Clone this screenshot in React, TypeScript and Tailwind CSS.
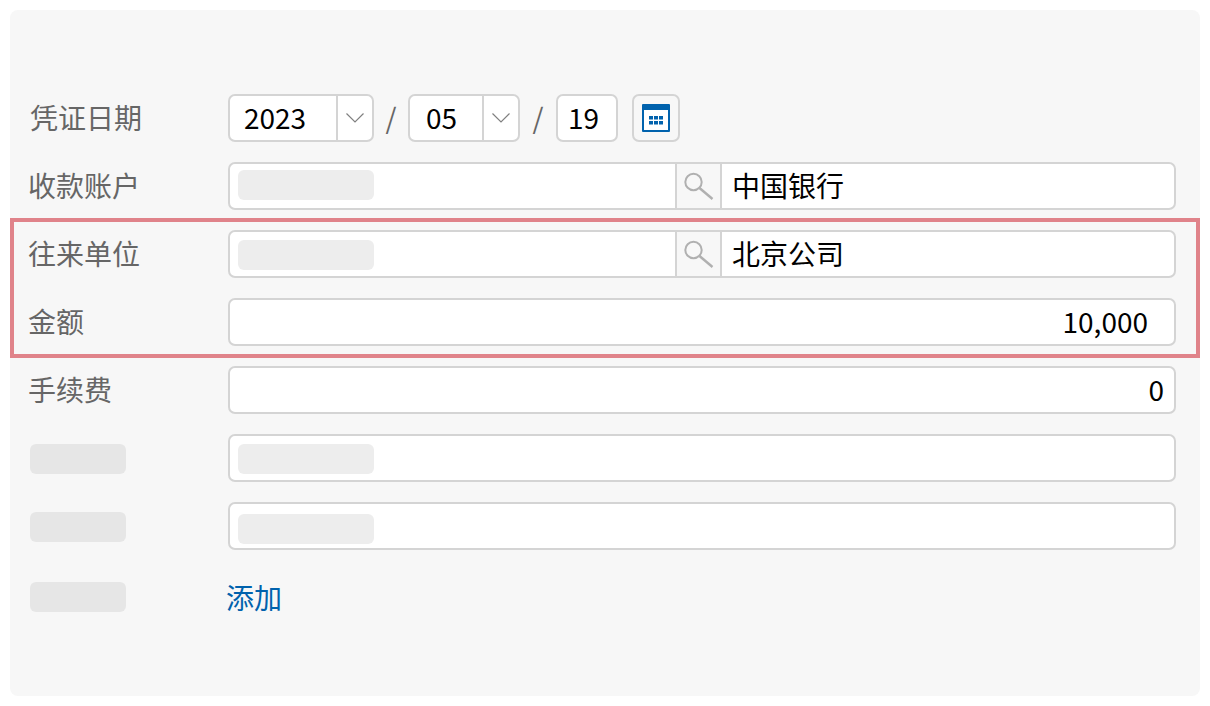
const FONT = "font-['Noto_Sans_CJK_SC','Noto_Sans_CJK_JP',sans-serif]";

function Blank({ label }: { label?: boolean }) {
  return label ? (
    <div className="h-[30px] w-[96px] rounded-[6px] bg-[#e6e6e6]" />
  ) : (
    <div className="h-[30px] w-[136px] rounded-[6px] bg-[#ededed]" />
  );
}

function SearchIcon() {
  return (
    <svg width="30" height="30" viewBox="0 0 30 30" fill="none" stroke="#b0b0b0" strokeWidth="2">
      <circle cx="9.5" cy="11" r="8.2" />
      <path d="M15.5 17l13 11" strokeWidth="2.4" />
    </svg>
  );
}

function Chevron() {
  return (
    <svg width="20" height="12" viewBox="0 0 20 12" fill="none" stroke="#808080" strokeWidth="1.2">
      <path d="M1.5 1.5L10 10l8.5-8.5" />
    </svg>
  );
}

function CalendarIcon() {
  return (
    <svg width="28" height="28" viewBox="0 0 28 28">
      <rect x="0" y="0" width="28" height="28" rx="1" fill="#0062ad" />
      <rect x="2" y="6" width="24" height="20" fill="#fff" />
      <g fill="#0062ad">
        <rect x="7" y="12" width="4" height="3.5" />
        <rect x="12" y="12" width="4" height="3.5" />
        <rect x="17" y="12" width="4" height="3.5" />
        <rect x="7" y="17" width="4" height="3.5" />
        <rect x="12" y="17" width="4" height="3.5" />
        <rect x="17" y="17" width="4" height="3.5" />
      </g>
    </svg>
  );
}

function DropSelect({ value, width, textPad }: { value: string; width: string; textPad: string }) {
  return (
    <div className={`flex h-12 items-stretch rounded-[7px] border-2 border-[#d4d4d4] bg-white ${width}`}>
      <div className={`flex flex-1 items-center pb-[3px] text-black ${textPad}`}>{value}</div>
      <div className="flex w-[36px] items-center justify-center border-l-2 border-[#d4d4d4]">
        <Chevron />
      </div>
    </div>
  );
}

function Lookup({ name, blankPad }: { name: string; blankPad: string }) {
  return (
    <div className="flex h-12 flex-1 items-stretch rounded-[7px] border-2 border-[#d4d4d4] bg-white">
      <div className={`flex w-[445px] items-center pl-2 ${blankPad}`}>
        <Blank />
      </div>
      <div className="flex w-[47px] items-center justify-center border-x-2 border-[#d4d4d4] bg-[#f7f7f7]">
        <SearchIcon />
      </div>
      <div className="flex flex-1 items-center pb-[2px] pl-[10px] text-black">{name}</div>
    </div>
  );
}

function Row({ label, blank, children, tight, shift, flat }: { label?: string; blank?: boolean; children: React.ReactNode; tight?: boolean; shift?: boolean; flat?: boolean }) {
  return (
    <div className={`flex items-center ${tight ? "pl-[14px] pr-5" : "pl-5 pr-6"}`}>
      <div
        className={`shrink-0 text-[#666] ${blank ? (flat ? "" : "pt-[2px]") : "pb-[3px]"} ${tight ? "w-[200px]" : "w-[198px]"} ${
          shift ? "-ml-[2px] !w-[200px]" : ""
        }`}
      >
        {blank ? <Blank label /> : label}
      </div>
      {children}
    </div>
  );
}

export default function App() {
  return (
    <div className={`h-[706px] w-[1210px] bg-white p-[10px] text-[28px] leading-none ${FONT}`}>
      <div className="flex h-[686px] w-[1190px] flex-col gap-5 rounded-[8px] bg-[#f7f7f7] pt-[84px]">
        <Row label="凭证日期">
          <div className="flex items-center">
            <DropSelect value="2023" width="w-[146px]" textPad="pl-[14px]" />
            <span className="w-[34px] pb-[3px] text-center text-[#666]">/</span>
            <DropSelect value="05" width="w-[112px]" textPad="pl-4" />
            <span className="w-[36px] pb-[3px] text-center text-[#666]">/</span>
            <div className="flex h-12 w-[62px] items-center rounded-[7px] border-2 border-[#d4d4d4] bg-white pb-[3px] pl-[10px] text-black">
              19
            </div>
            <div className="ml-[14px] flex h-12 w-12 items-center justify-center rounded-[7px] border-2 border-[#d4d4d4]">
              <CalendarIcon />
            </div>
          </div>
        </Row>
        <Row label="收款账户" shift>
          <Lookup name="中国银行" blankPad="pb-[2px]" />
        </Row>

        {/* highlighted part of the form */}
        <div className="-my-3 flex flex-col gap-5 border-4 border-[#e0838a] py-2">
          <Row label="往来单位" tight>
            <Lookup name="北京公司" blankPad="pt-[2px]" />
          </Row>
          <Row label="金额" tight>
            <div className="flex h-12 flex-1 items-center justify-end rounded-[7px] border-2 border-[#d4d4d4] bg-white pb-[3px] pr-[26px] text-black">
              10,000
            </div>
          </Row>
        </div>

        <Row label="手续费" shift>
          <div className="flex h-12 flex-1 items-center justify-end rounded-[7px] border-2 border-[#d4d4d4] bg-white pb-[3px] pr-[10px] text-black">
            0
          </div>
        </Row>
        <Row blank>
          <div className="flex h-12 flex-1 items-center rounded-[7px] border-2 border-[#d4d4d4] bg-white pl-2 pt-[2px]">
            <Blank />
          </div>
        </Row>
        <Row blank>
          <div className="flex h-12 flex-1 items-center rounded-[7px] border-2 border-[#d4d4d4] bg-white pl-2 pt-[6px]">
            <Blank />
          </div>
        </Row>
        <div className="mt-[3px]">
          <Row blank flat>
            <a className="-ml-[2px] flex h-12 items-center text-[#0062ad]">添加</a>
          </Row>
        </div>
      </div>
    </div>
  );
}
